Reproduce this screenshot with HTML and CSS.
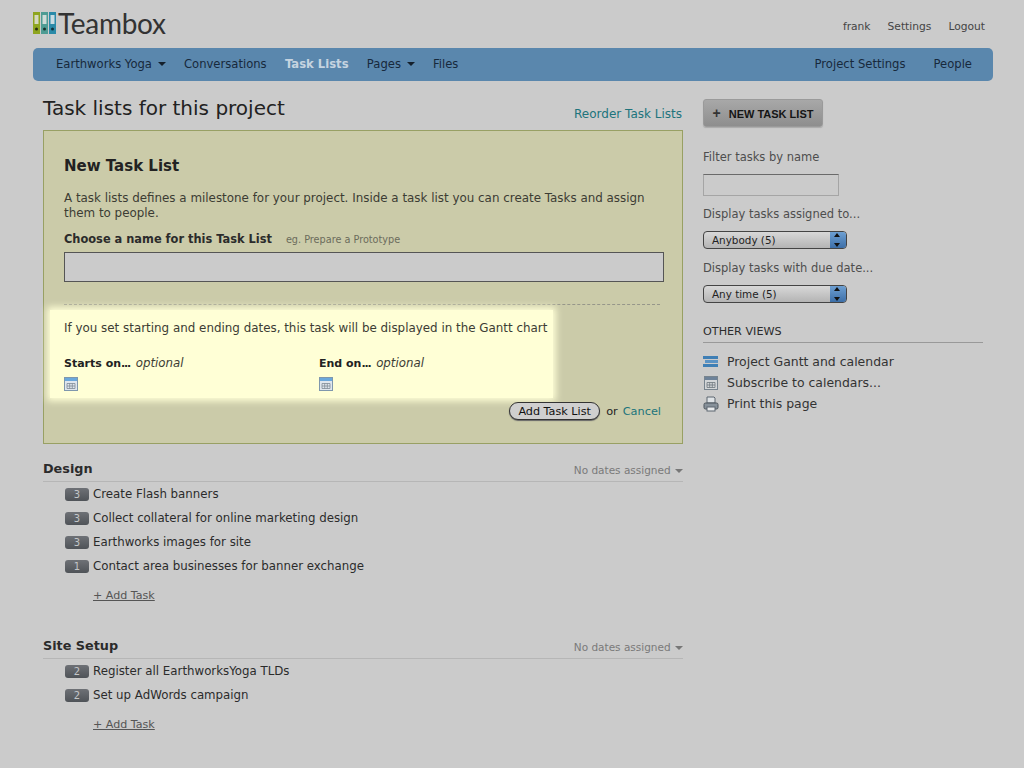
FILE: index.html
```html
<!DOCTYPE html>
<html lang="en">
<head>
    <meta charset="UTF-8">
    <title>Teambox</title>
    <link rel="stylesheet" href="styles.css">
</head>
<body>
<div class="page">
    <div class="header">
        <div class="logo">
            <svg class="logo-icon" width="24" height="23" viewBox="0 0 24 23">
                <rect x="0" y="0" width="7" height="22" fill="#8ea51f"/>
                <rect x="8" y="0" width="7" height="22" fill="#4e9c94"/>
                <rect x="16" y="0" width="7" height="22" fill="#2a8aa8"/>
                <rect x="1.5" y="3" width="4" height="9" fill="#d5d8c0"/>
                <rect x="9.5" y="3" width="4" height="9" fill="#cfdcd8"/>
                <rect x="17.5" y="3" width="4" height="9" fill="#c8dce2"/>
                <circle cx="3.5" cy="17" r="1.5" fill="#2a3010"/>
                <circle cx="11.5" cy="17" r="1.5" fill="#17302c"/>
                <circle cx="19.5" cy="17" r="1.5" fill="#10303a"/>
            </svg>
            <span class="logo-text">Teambox</span>
        </div>
        <ul class="user-links">
            <li>frank</li>
            <li>Settings</li>
            <li>Logout</li>
        </ul>
    </div>

    <div class="nav">
        <ul class="nav-left">
            <li>Earthworks Yoga <i class="caret"></i></li>
            <li>Conversations</li>
            <li class="current">Task Lists</li>
            <li>Pages <i class="caret"></i></li>
            <li>Files</li>
        </ul>
        <ul class="nav-right">
            <li>Project Settings</li>
            <li>People</li>
        </ul>
    </div>

    <div class="content">
        <div class="main">
            <div class="title-row">
                <h1>Task lists for this project</h1>
                <a class="teal">Reorder Task Lists</a>
            </div>

            <div class="new-list">
                <h2>New Task List</h2>
                <p class="intro">A task lists defines a milestone for your project. Inside a task list you can create Tasks and assign them to people.</p>
                <div class="name-label"><b>Choose a name for this Task List</b><span class="hint">eg. Prepare a Prototype</span></div>
                <input class="name-input" type="text">
                <div class="dashed"></div>
                <div class="dates">
                    <p>If you set starting and ending dates, this task will be displayed in the Gantt chart</p>
                    <div class="date-cols">
                        <div class="date-col">
                            <div><b>Starts on<span class="dots">...</span></b> <em>optional</em></div>
                            <svg class="cal" width="14" height="14" viewBox="0 0 14 14"><use href="#cal-icon"/></svg>
                        </div>
                        <div class="date-col">
                            <div><b>End on<span class="dots">...</span></b> <em>optional</em></div>
                            <svg class="cal" width="14" height="14" viewBox="0 0 14 14"><use href="#cal-icon"/></svg>
                        </div>
                    </div>
                </div>
                <div class="form-actions">
                    <button class="add-btn">Add Task List</button><span>or</span><a class="teal">Cancel</a>
                </div>
            </div>

            <div class="list">
                <div class="list-head">
                    <h3>Design</h3>
                    <span class="no-dates">No dates assigned <i class="caret grey"></i></span>
                </div>
                <ul class="tasks">
                    <li><span class="count">3</span>Create Flash banners</li>
                    <li><span class="count">3</span>Collect collateral for online marketing design</li>
                    <li><span class="count">3</span>Earthworks images for site</li>
                    <li><span class="count">1</span>Contact area businesses for banner exchange</li>
                </ul>
                <a class="add-task">+ Add Task</a>
            </div>

            <div class="list">
                <div class="list-head">
                    <h3>Site Setup</h3>
                    <span class="no-dates">No dates assigned <i class="caret grey"></i></span>
                </div>
                <ul class="tasks">
                    <li><span class="count">2</span>Register all EarthworksYoga TLDs</li>
                    <li><span class="count">2</span>Set up AdWords campaign</li>
                </ul>
                <a class="add-task">+ Add Task</a>
            </div>
        </div>

        <div class="side">
            <button class="new-btn"><span class="plus">+</span>NEW TASK LIST</button>
            <label class="filter-label first">Filter tasks by name</label>
            <input class="filter-input" type="text">
            <label class="filter-label">Display tasks assigned to...</label>
            <div class="select"><span>Anybody (5)</span><i class="arrows"></i></div>
            <label class="filter-label">Display tasks with due date...</label>
            <div class="select"><span>Any time (5)</span><i class="arrows"></i></div>

            <h4>OTHER VIEWS</h4>
            <ul class="views">
                <li>
                    <svg width="16" height="14" viewBox="0 0 16 14">
                        <rect x="0" y="1" width="15" height="3" fill="#3f7fb5"/>
                        <rect x="2" y="5" width="13" height="3" fill="#5b93c4"/>
                        <rect x="0" y="9" width="15" height="3" fill="#3f7fb5"/>
                    </svg>
                    Project Gantt and calendar
                </li>
                <li>
                    <svg width="16" height="14" viewBox="0 0 14 14"><use href="#cal-grey"/></svg>
                    Subscribe to calendars...
                </li>
                <li>
                    <svg width="16" height="16" viewBox="0 0 16 16">
                        <path d="M4 1h7l1 1v5H4z" fill="#dfe3e6" stroke="#5d6670"/>
                        <rect x="1" y="7" width="14" height="6" rx="1.5" fill="#87919a" stroke="#4d555c"/>
                        <rect x="4" y="11" width="8" height="4" fill="#e8eaec" stroke="#5d6670"/>
                    </svg>
                    Print this page
                </li>
            </ul>
        </div>
    </div>
</div>

<svg class="defs" width="0" height="0">
    <symbol id="cal-icon" viewBox="0 0 14 14">
        <rect x="0" y="0" width="14" height="14" fill="#dfe6ee"/>
        <rect x="0" y="0" width="14" height="4" fill="#6aa8dc"/>
        <rect x="0.5" y="0.5" width="13" height="13" fill="none" stroke="#7f97ad"/>
        <path d="M3 6.5h8v5H3zM3 9h8M5.7 6.5v5M8.3 6.5v5" fill="none" stroke="#7d8a96" stroke-width=".8"/>
    </symbol>
    <symbol id="cal-grey" viewBox="0 0 14 14">
        <rect x="0" y="0" width="14" height="14" fill="#d3d6d8"/>
        <rect x="0" y="0" width="14" height="4" fill="#6d8299"/>
        <rect x="0.5" y="0.5" width="13" height="13" fill="none" stroke="#78848e"/>
        <path d="M3 6.5h8v5H3zM3 9h8M5.7 6.5v5M8.3 6.5v5" fill="none" stroke="#6f777e" stroke-width=".8"/>
    </symbol>
</svg>
</body>
</html>
```

FILE: styles.css
```css
* {
    padding: 0;
    margin: 0;
    list-style: none;
    box-sizing: border-box;
}

body {
    background: #cbcbcb;
    color: #2b2b2b;
    font-family: "DejaVu Sans", sans-serif;
    font-size: 12px;
}

.page {
    width: 960px;
    margin-left: 33px;
}

.defs {
    position: absolute;
}

/* header */
.header {
    height: 48px;
    display: flex;
    justify-content: space-between;
    align-items: flex-start;
}

.logo {
    display: flex;
    align-items: center;
    padding-top: 8px;
}

.logo-text {
    font-family: "Lato", sans-serif;
    font-size: 28px;
    line-height: 30px;
    letter-spacing: -0.3px;
    color: #333;
    margin-left: 1px;
}

.user-links {
    display: flex;
    gap: 17px;
    padding: 20px 8px 0 0;
    font-size: 10.7px;
    line-height: 14px;
    color: #444;
}

/* nav */
.nav {
    height: 33px;
    background: #5a87ad;
    border-radius: 5px;
    display: flex;
    justify-content: space-between;
    align-items: center;
    padding: 0 21px 2px 23px;
    color: #17293c;
    font-size: 11.6px;
}

.nav ul {
    display: flex;
}

.nav-left {
    gap: 18.3px;
}

.nav-right {
    gap: 28px;
}

.nav .current {
    color: #c6d4e0;
    font-weight: bold;
}

.caret {
    display: inline-block;
    border: 4px solid transparent;
    border-top-color: #14202c;
    border-bottom: 0;
    vertical-align: middle;
    margin-left: 2px;
}

.caret.grey {
    border-top-color: #777;
    margin-left: 1px;
}

/* columns */
.content {
    display: flex;
    padding-left: 10px;
}

.main {
    width: 640px;
}

.side {
    width: 280px;
    margin-left: 20px;
    padding-top: 18px;
}

.title-row {
    height: 49px;
    display: flex;
    justify-content: space-between;
    align-items: flex-end;
    padding: 0 1px 9px 0;
}

h1 {
    font-size: 20px;
    font-weight: normal;
    line-height: 24px;
    margin-bottom: 1px;
    color: #222;
}

.teal {
    color: #20747c;
}

/* new task list form */
.new-list {
    height: 314px;
    background: #cbcba9;
    border: 1px solid #98a064;
    padding: 25px 20px 0;
}

h2 {
    font-size: 15px;
    line-height: 20px;
    color: #222;
}

.intro {
    margin-top: 15px;
    line-height: 15px;
    font-size: 11.9px;
    color: #3c3c34;
}

.name-label {
    margin-top: 11px;
    line-height: 15px;
    font-size: 11.4px;
}

.hint {
    margin-left: 14px;
    font-size: 9.7px;
    color: #6c6c5c;
}

.name-input {
    display: block;
    width: 600px;
    height: 30px;
    margin-top: 5px;
    background: #cbcbcb;
    border: 1px solid #555;
}

.dashed {
    border-top: 1px dashed #96968a;
    margin-top: 22px;
    margin-right: 2px;
}

.dates {
    width: 503px;
    height: 88px;
    margin: 5px 0 0 -14px;
    padding: 11px 0 0 14px;
    background: #ffffd6;
    box-shadow: 0 0 7px 3px #ffffd6;
    color: #3c3c34;
    font-size: 11.9px;
}

.date-cols {
    display: flex;
    margin-top: 21px;
}

.date-col {
    flex: none;
    width: 255px;
    line-height: 15px;
    font-size: 11.8px;
}

.date-col b {
    color: #222;
    font-size: 11px;
}

.dots {
    letter-spacing: -1.2px;
    margin-right: 2px;
}

.cal {
    display: block;
    margin-top: 6px;
}

.form-actions {
    display: flex;
    justify-content: flex-end;
    align-items: center;
    gap: 5px;
    padding-right: 1px;
    margin-top: 4px;
    font-size: 11.3px;
    color: #222;
}

.add-btn {
    font-family: inherit;
    font-size: 11.2px;
    height: 18px;
    width: 91px;
    margin-right: 1px;
    background: #cfcfcf;
    color: #111;
    border: 1px solid #333;
    border-radius: 9px;
    box-shadow: 0 1px 1px #666;
}

/* task lists */
.list {
    margin-top: 15px;
    height: 162px;
}

.list-head {
    height: 23px;
    display: flex;
    justify-content: space-between;
    align-items: center;
    border-bottom: 1px solid #b6b6b6;
}

h3 {
    font-size: 12.8px;
    padding-bottom: 4px;
    color: #2b2b2b;
}

.no-dates {
    font-size: 10.5px;
    color: #7a7a7a;
}

.tasks {
    padding-left: 22px;
}

.tasks li {
    height: 24px;
    display: flex;
    align-items: center;
    font-size: 11.8px;
    color: #2b2b2b;
}

.count {
    width: 24px;
    height: 13px;
    margin-right: 4px;
    background: linear-gradient(#6e7176, #4f5358);
    border-radius: 3px;
    color: #c4c6c8;
    font-size: 10px;
    line-height: 13px;
    text-align: center;
}

.add-task {
    display: block;
    margin: 11px 0 0 50px;
    font-size: 11.1px;
    color: #555;
    text-decoration: underline;
}

/* sidebar */
.new-btn {
    display: block;
    width: 120px;
    height: 28px;
    background: linear-gradient(#a8a8a8, #8e8e8e);
    border: 1px solid #9a9a9a;
    border-radius: 3px;
    font-family: "Liberation Sans", sans-serif;
    font-size: 11px;
    font-weight: bold;
    color: #151515;
    box-shadow: 0 1px 1px #aaa;
}

.plus {
    font-size: 14px;
    margin-right: 8px;
    color: #333;
}

.filter-label {
    display: block;
    margin-top: 12px;
    line-height: 15px;
    font-size: 11.5px;
    color: #4e4e4e;
}

.filter-label.first {
    margin-top: 23px;
}

.filter-input {
    display: block;
    width: 136px;
    height: 22px;
    margin-top: 9px;
    background: #cbcbcb;
    border: 1px solid #a5a5a5;
    border-top-color: #6a6a6a;
}

.filter-input + .filter-label {
    margin-top: 11px;
}

.select {
    width: 144px;
    height: 18px;
    margin-top: 9px;
    display: flex;
    justify-content: space-between;
    border: 1px solid #444;
    border-radius: 4px;
    background: linear-gradient(#d8d8d8, #b4b4b4);
    overflow: hidden;
    font-size: 10.4px;
    line-height: 16px;
    color: #222;
}

.select span {
    padding-left: 8px;
}

.arrows {
    width: 16px;
    background: linear-gradient(#6d9fd2, #3d6fa8);
    position: relative;
}

.arrows::before,
.arrows::after {
    content: "";
    position: absolute;
    left: 4px;
    border: 3px solid transparent;
}

.arrows::before {
    top: 1px;
    border-top: 0;
    border-bottom: 4px solid #111;
}

.arrows::after {
    bottom: 1px;
    border-bottom: 0;
    border-top: 4px solid #111;
}

h4 {
    margin-top: 21px;
    padding-bottom: 3px;
    font-size: 11.2px;
    font-weight: normal;
    line-height: 15px;
    color: #2b2b2b;
    border-bottom: 1px solid #999;
}

.views {
    margin-top: 8px;
}

.views li {
    height: 21px;
    display: flex;
    align-items: center;
    gap: 8px;
    font-size: 12.45px;
    color: #333;
}
```
